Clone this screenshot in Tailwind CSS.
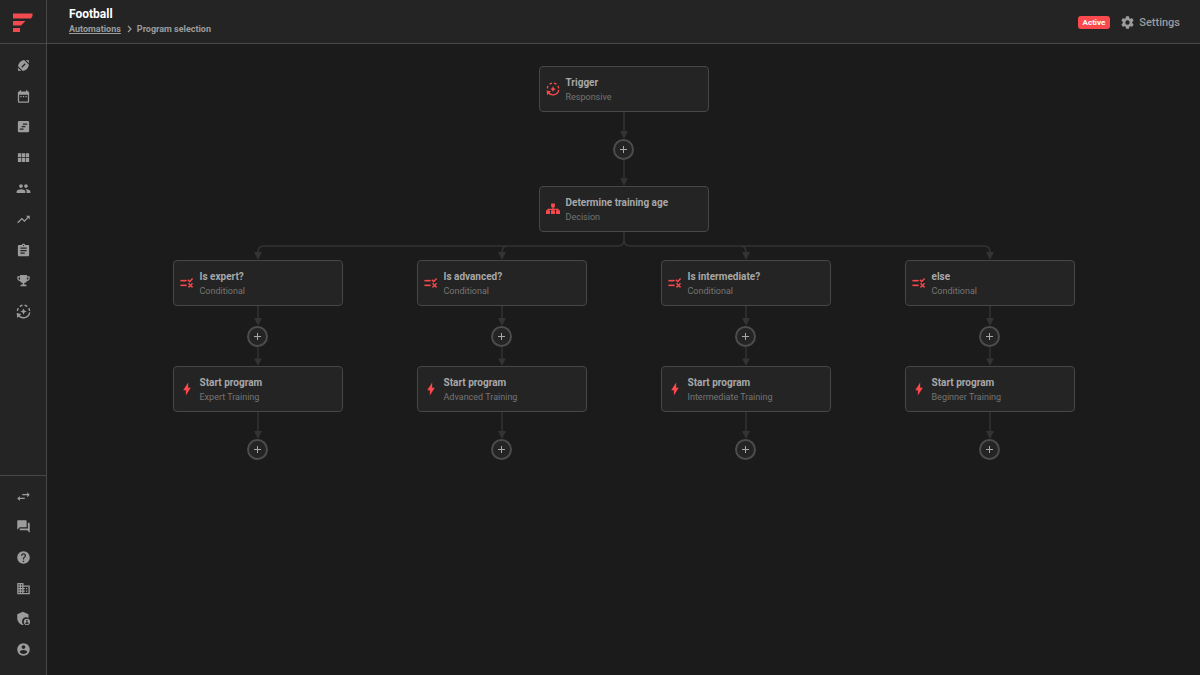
<!DOCTYPE html>
<html lang="en">
<head>
  <meta charset="UTF-8" />
  <meta name="viewport" content="width=device-width, initial-scale=1.0" />
  <title>Football - Program selection</title>
  <script src="https://cdn.jsdelivr.net/npm/@tailwindcss/browser@4"></script>
</head>
<body class="flex min-h-screen bg-[#1b1b1b] font-['Roboto',sans-serif] text-[#9c9c9c]">

  <!-- Icons -->
  <svg class="hidden">
    <symbol id="ball" viewBox="0 0 24 24"><path d="M3.02 15.62c-.08 2.42.32 4.34.67 4.69s2.28.76 4.69.67L3.02 15.62zM13.08 3.28C10.75 3.7 8.29 4.62 6.46 6.46s-2.76 4.29-3.18 6.62l7.63 7.63c2.34-.41 4.79-1.34 6.62-3.18s2.76-4.29 3.18-6.62L13.08 3.28zM9.9 15.5l-1.4-1.4 5.6-5.6 1.4 1.4-5.6 5.6zM20.98 8.38c.08-2.42-.32-4.34-.67-4.69s-2.28-.76-4.69-.67l5.36 5.36z"/></symbol>
    <symbol id="calendar" viewBox="0 0 24 24"><path d="M9 11H7v2h2v-2zm4 0h-2v2h2v-2zm4 0h-2v2h2v-2zm2-7h-1V2h-2v2H8V2H6v2H5c-1.11 0-2 .9-2 2v14c0 1.1.89 2 2 2h14c1.1 0 2-.9 2-2V6c0-1.1-.9-2-2-2zm0 16H5V9h14v11z"/></symbol>
    <symbol id="program" viewBox="0 0 24 24"><path fill-rule="evenodd" d="M5 3h14a2 2 0 0 1 2 2v14a2 2 0 0 1-2 2H5a2 2 0 0 1-2-2V5a2 2 0 0 1 2-2zm6 4v2h7V7h-7zm-2 4v2h6v-2H9zm-3 4v2h6v-2H6z"/></symbol>
    <symbol id="grid" viewBox="0 0 24 24"><path d="M3 5h5.300v6.400H3zm6.300 0h5.400v6.400H9.300zm6.400 0H21v6.400h-5.300zM3 12.600h5.300V19H3zm6.300 0h5.400V19H9.300zm6.400 0H21V19h-5.300z"/></symbol>
    <symbol id="people" viewBox="0 0 24 24"><path d="M16 11c1.660 0 2.990-1.340 2.990-3S17.660 5 16 5c-1.660 0-3 1.340-3 3s1.340 3 3 3zm-8 0c1.660 0 2.990-1.340 2.990-3S9.660 5 8 5C6.340 5 5 6.340 5 8s1.340 3 3 3zm0 2c-2.330 0-7 1.170-7 3.500V19h14v-2.500c0-2.330-4.670-3.500-7-3.500zm8 0c-.29 0-.62.02-.97.05 1.160.84 1.970 1.970 1.970 3.450V19h6v-2.500c0-2.330-4.670-3.500-7-3.500z"/></symbol>
    <symbol id="trend" viewBox="0 0 24 24"><path d="M16 6l2.290 2.290-4.880 4.880-4-4L2 16.590 3.410 18l6-6 4 4 6.300-6.290L22 12V6z"/></symbol>
    <symbol id="clipboard" viewBox="0 0 24 24"><path d="M19 3h-4.180C14.400 1.840 13.300 1 12 1c-1.300 0-2.400.84-2.820 2H5c-1.100 0-2 .9-2 2v14c0 1.100.9 2 2 2h14c1.100 0 2-.9 2-2V5c0-1.100-.9-2-2-2zm-7 0c.55 0 1 .45 1 1s-.45 1-1 1-1-.45-1-1 .45-1 1-1zm2 14H7v-2h7v2zm3-4H7v-2h10v2zm0-4H7V7h10v2z"/></symbol>
    <symbol id="trophy" viewBox="0 0 24 24"><path d="M21 5h-3.500V3h-11v2H3c-.6 0-1 .5-1 1v2c0 2.700 2 4.900 4.600 5.100.8 1.500 2.300 2.600 4.200 2.900v2.500H9.500C8 18.500 7 19.500 7 21h10c0-1.500-1-2.500-2.500-2.500h-1.300V16c1.900-.3 3.400-1.400 4.200-2.900C20 12.900 22 10.700 22 8V6c0-.5-.4-1-1-1zM4 8V7h2.500v4C5 10.600 4 9.400 4 8zm16 0c0 1.400-1 2.600-2.500 3V7H20v1z"/></symbol>
    <symbol id="auto" viewBox="0 0 24 24"><path fill="none" stroke="currentColor" stroke-width="2.200" d="M2.200 11a10 10 0 0 1 1.500-4.500M6 4a10 10 0 0 1 4.300-2M13.700 2A10 10 0 0 1 18 4M20.300 6.500a10 10 0 0 1 1.500 4.500M21.900 13.500A10 10 0 0 1 4 18"/><path d="M1 14.500l7.500 1.500L2 22.500zM12 7l1.500 3.500L17 12l-3.500 1.500L12 17l-1.500-3.500L7 12l3.500-1.500z"/></symbol>
    <symbol id="swap" viewBox="0 0 24 24"><path d="M22 9l-4-4v3h-8v2h8v3zM6 11l-4 4 4 4v-3h8v-2H6z"/></symbol>
    <symbol id="chat" viewBox="0 0 24 24"><path d="M21 6h-2v9H6v2c0 .55.45 1 1 1h11l4 4V7c0-.55-.45-1-1-1zm-4 6V3c0-.55-.45-1-1-1H3c-.55 0-1 .45-1 1v14l4-4h10c.55 0 1-.45 1-1z"/></symbol>
    <symbol id="help" viewBox="0 0 24 24"><path d="M12 2C6.480 2 2 6.480 2 12s4.480 10 10 10 10-4.480 10-10S17.520 2 12 2zm1 17h-2v-2h2v2zm2.070-7.750l-.9.920C13.450 12.900 13 13.500 13 15h-2v-.5c0-1.100.45-2.100 1.170-2.830l1.240-1.260c.37-.36.59-.86.59-1.410 0-1.100-.9-2-2-2s-2 .9-2 2H8c0-2.210 1.790-4 4-4s4 1.790 4 4c0 .88-.36 1.680-.93 2.250z"/></symbol>
    <symbol id="company" viewBox="0 0 24 24"><path d="M12 7V3H2v18h20V7H12zM6 19H4v-2h2v2zm0-4H4v-2h2v2zm0-4H4V9h2v2zm0-4H4V5h2v2zm4 12H8v-2h2v2zm0-4H8v-2h2v2zm0-4H8V9h2v2zm0-4H8V5h2v2zm10 12h-8v-2h2v-2h-2v-2h2v-2h-2V9h8v10zm-2-8h-2v2h2v-2zm0 4h-2v2h2v-2z"/></symbol>
    <symbol id="shield" viewBox="0 0 24 24"><path d="M11 1L2 5v6c0 5.500 3.800 10.300 9 11.500.5-.1 1-.3 1.400-.4A6.500 6.500 0 0 1 20 11.300V5z"/><path fill-rule="evenodd" d="M17.500 12.500a5 5 0 1 0 0 10 5 5 0 0 0 0-10zm0 1.700a1.500 1.500 0 1 1 0 3 1.500 1.500 0 0 1 0-3zm0 3.900c1 0 2.800.5 2.900 1.500a3.500 3.500 0 0 1-5.800 0c.1-1 1.900-1.500 2.900-1.500z"/></symbol>
    <symbol id="account" viewBox="0 0 24 24"><path d="M12 2C6.480 2 2 6.480 2 12s4.480 10 10 10 10-4.480 10-10S17.520 2 12 2zm0 3c1.660 0 3 1.340 3 3s-1.340 3-3 3-3-1.340-3-3 1.340-3 3-3zm0 14.200c-2.500 0-4.710-1.280-6-3.220.03-1.990 4-3.080 6-3.080 1.990 0 5.970 1.090 6 3.080-1.290 1.940-3.500 3.220-6 3.220z"/></symbol>
    <symbol id="gear" viewBox="0 0 24 24"><path d="M12 15.500A3.500 3.500 0 0 1 8.500 12 3.500 3.500 0 0 1 12 8.500a3.500 3.500 0 0 1 3.500 3.500 3.500 3.500 0 0 1-3.500 3.500m7.430-2.530c.04-.32.07-.64.07-.97s-.03-.66-.07-1l2.110-1.630c.19-.15.24-.42.12-.64l-2-3.460c-.12-.22-.39-.31-.61-.22l-2.490 1c-.52-.39-1.060-.73-1.690-.98l-.37-2.650A.506.506 0 0 0 14 2h-4c-.25 0-.46.18-.5.42l-.37 2.650c-.63.25-1.170.59-1.690.98l-2.490-1c-.22-.09-.49 0-.61.22l-2 3.460c-.13.22-.07.49.12.64L4.570 11c-.04.34-.07.67-.07 1s.03.65.07.97l-2.110 1.660c-.19.15-.25.42-.12.64l2 3.460c.12.22.39.3.61.22l2.490-1.010c.52.4 1.060.74 1.690.99l.37 2.650c.04.24.25.42.5.42h4c.25 0 .46-.18.5-.42l.37-2.650c.63-.26 1.170-.59 1.690-.99l2.490 1.010c.22.08.49 0 .61-.22l2-3.460c.12-.22.07-.49-.12-.64z"/></symbol>
    <symbol id="decision" viewBox="0 0 24 24"><path d="M8.800 2.500h6.400v6.500h-2v3.500h-2.400V9h-2zM3 11.500h18v2H3z"/><rect y="14" width="6.800" height="6.500" rx="1"/><rect x="8.600" y="14" width="6.800" height="6.500" rx="1"/><rect x="17.200" y="14" width="6.800" height="6.500" rx="1"/><path d="M2.400 12h2v3h-2zM11 12h2v3h-2zM19.600 12h2v3h-2z"/></symbol>
    <symbol id="rule" viewBox="0 0 24 24"><path d="M16.540 11L13 7.460l1.410-1.410 2.120 2.120 4.240-4.240 1.410 1.410L16.540 11zM11 7H1v2h10V7zm11 6.410L20.590 12 18 14.590 15.410 12 14 13.410 16.590 16 14 18.590 15.410 20 18 17.410 20.590 20 22 18.590 19.410 16 22 13.410zM11 15H1v2h10v-2z" stroke="currentColor" stroke-width=".6"/></symbol>
    <symbol id="bolt" viewBox="0 0 24 24"><path d="M14 1L5.500 14H10v9l8.500-13H14z"/></symbol>
    <symbol id="plus" viewBox="0 0 7 7"><path fill="none" stroke="currentColor" d="M3.500 0v7M0 3.500h7"/></symbol>
    <symbol id="arrow-27" viewBox="0 0 10 27"><path fill="none" stroke="currentColor" stroke-width="1.500" d="M5 0v22"/><path d="M1 19h8l-4 8z"/></symbol>
    <symbol id="arrow-20" viewBox="0 0 10 20"><path fill="none" stroke="currentColor" stroke-width="1.500" d="M5 0v15"/><path d="M1 12h8l-4 8z"/></symbol>
  </svg>

  <!-- Sidebar -->
  <aside class="flex w-[47px] shrink-0 flex-col border-r border-[#474747] bg-[#242424]">
    <a href="#" aria-label="Home" class="flex h-11 items-center justify-center border-b border-[#474747]">
      <svg class="h-5 w-5 fill-[#f14b4f]" viewBox="0 0 20 20"><path d="M0 1.500h19.500V4L18 6.500H0zM0 9h12.500L8 13.500H0zM0 16h7v4H0z"/></svg>
    </a>
    <nav aria-label="Main" class="mt-1.5 grid h-[277px] auto-rows-fr place-items-center">
      <a href="#" aria-label="Exercises"><svg class="size-[15px] fill-current"><use href="#ball"/></svg></a>
      <a href="#" aria-label="Calendar"><svg class="size-[15px] fill-current"><use href="#calendar"/></svg></a>
      <a href="#" aria-label="Programs"><svg class="size-[15px] fill-current"><use href="#program"/></svg></a>
      <a href="#" aria-label="Library"><svg class="size-[15px] fill-current"><use href="#grid"/></svg></a>
      <a href="#" aria-label="Athletes"><svg class="size-[15px] fill-current"><use href="#people"/></svg></a>
      <a href="#" aria-label="Analytics"><svg class="size-[15px] fill-current"><use href="#trend"/></svg></a>
      <a href="#" aria-label="Forms"><svg class="size-[15px] fill-current"><use href="#clipboard"/></svg></a>
      <a href="#" aria-label="Leaderboard"><svg class="size-[15px] fill-current"><use href="#trophy"/></svg></a>
      <a href="#" aria-label="Automations"><svg class="size-[15px] fill-current"><use href="#auto"/></svg></a>
    </nav>
    <nav aria-label="Account" class="mt-auto border-t border-[#474747] pt-[5px] pb-2.5">
      <div class="grid h-[184px] auto-rows-fr place-items-center">
        <a href="#" aria-label="Switch"><svg class="size-[15px] fill-current"><use href="#swap"/></svg></a>
        <a href="#" aria-label="Messages"><svg class="size-[15px] fill-current"><use href="#chat"/></svg></a>
        <a href="#" aria-label="Help"><svg class="size-[15px] fill-current"><use href="#help"/></svg></a>
        <a href="#" aria-label="Organization"><svg class="size-[15px] fill-current"><use href="#company"/></svg></a>
        <a href="#" aria-label="Admin"><svg class="size-[15px] fill-current"><use href="#shield"/></svg></a>
        <a href="#" aria-label="Profile"><svg class="size-[15px] fill-current"><use href="#account"/></svg></a>
      </div>
    </nav>
  </aside>

  <div class="flex min-w-0 flex-1 flex-col">
    <!-- Header -->
    <header class="flex h-11 items-center justify-between border-b border-[#474747] bg-[#242424] pr-5 pl-[22px]">
      <div class="pb-0.5">
        <h1 class="text-[12px] leading-4 font-bold text-white">Football</h1>
        <nav aria-label="Breadcrumb" class="flex items-center gap-1 text-[9px] leading-[14px] font-bold">
          <a href="#" class="underline">Automations</a>
          <svg class="h-2 w-2 fill-none stroke-current" viewBox="0 0 8 8"><path stroke-width="1.200" d="M3 1l3 3-3 3"/></svg>
          <span>Program selection</span>
        </nav>
      </div>
      <div class="flex items-center gap-2.5 pt-0.5">
        <span class="rounded-[3px] bg-[#fb4a4e] px-[5px] text-[8px] leading-[13px] font-bold text-white">Active</span>
        <button type="button" class="flex items-center gap-1 text-[11px] leading-4 font-medium">
          <svg class="size-[15px] fill-current"><use href="#gear"/></svg>
          Settings
        </button>
      </div>
    </header>

    <!-- Flow -->
    <main class="flex flex-1 flex-col items-center pt-[22px] text-[#333]">
      <button type="button" class="flex h-[46px] w-[170px] items-center gap-1.5 rounded border border-[#474747] bg-[#242424] px-1.5 text-left">
        <svg class="size-3.5 shrink-0 fill-current text-[#fb4a4e]"><use href="#auto"/></svg>
        <span class="pt-0.5">
          <span class="block text-[10px] leading-[14px] font-bold text-[#a8a8a8]">Trigger</span>
          <span class="block text-[9px] leading-[14px] text-[#757575]">Responsive</span>
        </span>
      </button>
      <svg class="h-[27px] w-2.5 fill-current"><use href="#arrow-27"/></svg>
      <button type="button" aria-label="Add step" class="flex size-[21px] items-center justify-center rounded-full border-2 border-[#4c4c4c] bg-[#242424] text-[#a8a8a8]"><svg class="size-[7px]"><use href="#plus"/></svg></button>
      <svg class="h-[26px] w-2.5 fill-current"><use href="#arrow-27"/></svg>
      <button type="button" class="flex h-[46px] w-[170px] items-center gap-1.5 rounded border border-[#474747] bg-[#242424] px-1.5 text-left">
        <svg class="size-3.5 shrink-0 fill-current text-[#fb4a4e]"><use href="#decision"/></svg>
        <span class="pt-0.5">
          <span class="block text-[10px] leading-[14px] font-bold text-[#a8a8a8]">Determine training age</span>
          <span class="block text-[9px] leading-[14px] text-[#757575]">Decision</span>
        </span>
      </button>

      <!-- Branches -->
      <svg class="h-7 w-[902px] fill-current" viewBox="0 0 902 28">
        <path fill="none" stroke="currentColor" stroke-width="1.500" d="M451 0v8q0 6-6 6H91q-6 0-6 6v2M451 8q0 6 6 6h354q6 0 6 6v2M335 14q-6 0-6 6v2M567 14q6 0 6 6v2"/>
        <path d="M81 20h8l-4 8zM325 20h8l-4 8zM569 20h8l-4 8zM813 20h8l-4 8z"/>
      </svg>

      <div class="flex gap-[74px]">
        <div class="flex flex-col items-center">
          <button type="button" class="flex h-[46px] w-[170px] items-center gap-1.5 rounded border border-[#474747] bg-[#242424] px-1.5 text-left">
            <svg class="size-3.5 shrink-0 fill-current text-[#fb4a4e]"><use href="#rule"/></svg>
            <span class="pt-0.5">
              <span class="block text-[10px] leading-[14px] font-bold text-[#a8a8a8]">Is expert?</span>
              <span class="block text-[9px] leading-[14px] text-[#757575]">Conditional</span>
            </span>
          </button>
          <svg class="h-5 w-2.5 fill-current"><use href="#arrow-20"/></svg>
          <button type="button" aria-label="Add step" class="flex size-[21px] items-center justify-center rounded-full border-2 border-[#4c4c4c] bg-[#242424] text-[#a8a8a8]"><svg class="size-[7px]"><use href="#plus"/></svg></button>
          <svg class="h-[19px] w-2.5 fill-current"><use href="#arrow-20"/></svg>
          <button type="button" class="flex h-[46px] w-[170px] items-center gap-1.5 rounded border border-[#474747] bg-[#242424] px-1.5 text-left">
            <svg class="size-3.5 shrink-0 fill-current text-[#fb4a4e]"><use href="#bolt"/></svg>
            <span class="pt-0.5">
              <span class="block text-[10px] leading-[14px] font-bold text-[#a8a8a8]">Start program</span>
              <span class="block text-[9px] leading-[14px] text-[#757575]">Expert Training</span>
            </span>
          </button>
          <svg class="h-[27px] w-2.5 fill-current"><use href="#arrow-27"/></svg>
          <button type="button" aria-label="Add step" class="flex size-[21px] items-center justify-center rounded-full border-2 border-[#4c4c4c] bg-[#242424] text-[#a8a8a8]"><svg class="size-[7px]"><use href="#plus"/></svg></button>
        </div>

        <div class="flex flex-col items-center">
          <button type="button" class="flex h-[46px] w-[170px] items-center gap-1.5 rounded border border-[#474747] bg-[#242424] px-1.5 text-left">
            <svg class="size-3.5 shrink-0 fill-current text-[#fb4a4e]"><use href="#rule"/></svg>
            <span class="pt-0.5">
              <span class="block text-[10px] leading-[14px] font-bold text-[#a8a8a8]">Is advanced?</span>
              <span class="block text-[9px] leading-[14px] text-[#757575]">Conditional</span>
            </span>
          </button>
          <svg class="h-5 w-2.5 fill-current"><use href="#arrow-20"/></svg>
          <button type="button" aria-label="Add step" class="flex size-[21px] items-center justify-center rounded-full border-2 border-[#4c4c4c] bg-[#242424] text-[#a8a8a8]"><svg class="size-[7px]"><use href="#plus"/></svg></button>
          <svg class="h-[19px] w-2.5 fill-current"><use href="#arrow-20"/></svg>
          <button type="button" class="flex h-[46px] w-[170px] items-center gap-1.5 rounded border border-[#474747] bg-[#242424] px-1.5 text-left">
            <svg class="size-3.5 shrink-0 fill-current text-[#fb4a4e]"><use href="#bolt"/></svg>
            <span class="pt-0.5">
              <span class="block text-[10px] leading-[14px] font-bold text-[#a8a8a8]">Start program</span>
              <span class="block text-[9px] leading-[14px] text-[#757575]">Advanced Training</span>
            </span>
          </button>
          <svg class="h-[27px] w-2.5 fill-current"><use href="#arrow-27"/></svg>
          <button type="button" aria-label="Add step" class="flex size-[21px] items-center justify-center rounded-full border-2 border-[#4c4c4c] bg-[#242424] text-[#a8a8a8]"><svg class="size-[7px]"><use href="#plus"/></svg></button>
        </div>

        <div class="flex flex-col items-center">
          <button type="button" class="flex h-[46px] w-[170px] items-center gap-1.5 rounded border border-[#474747] bg-[#242424] px-1.5 text-left">
            <svg class="size-3.5 shrink-0 fill-current text-[#fb4a4e]"><use href="#rule"/></svg>
            <span class="pt-0.5">
              <span class="block text-[10px] leading-[14px] font-bold text-[#a8a8a8]">Is intermediate?</span>
              <span class="block text-[9px] leading-[14px] text-[#757575]">Conditional</span>
            </span>
          </button>
          <svg class="h-5 w-2.5 fill-current"><use href="#arrow-20"/></svg>
          <button type="button" aria-label="Add step" class="flex size-[21px] items-center justify-center rounded-full border-2 border-[#4c4c4c] bg-[#242424] text-[#a8a8a8]"><svg class="size-[7px]"><use href="#plus"/></svg></button>
          <svg class="h-[19px] w-2.5 fill-current"><use href="#arrow-20"/></svg>
          <button type="button" class="flex h-[46px] w-[170px] items-center gap-1.5 rounded border border-[#474747] bg-[#242424] px-1.5 text-left">
            <svg class="size-3.5 shrink-0 fill-current text-[#fb4a4e]"><use href="#bolt"/></svg>
            <span class="pt-0.5">
              <span class="block text-[10px] leading-[14px] font-bold text-[#a8a8a8]">Start program</span>
              <span class="block text-[9px] leading-[14px] text-[#757575]">Intermediate Training</span>
            </span>
          </button>
          <svg class="h-[27px] w-2.5 fill-current"><use href="#arrow-27"/></svg>
          <button type="button" aria-label="Add step" class="flex size-[21px] items-center justify-center rounded-full border-2 border-[#4c4c4c] bg-[#242424] text-[#a8a8a8]"><svg class="size-[7px]"><use href="#plus"/></svg></button>
        </div>

        <div class="flex flex-col items-center">
          <button type="button" class="flex h-[46px] w-[170px] items-center gap-1.5 rounded border border-[#474747] bg-[#242424] px-1.5 text-left">
            <svg class="size-3.5 shrink-0 fill-current text-[#fb4a4e]"><use href="#rule"/></svg>
            <span class="pt-0.5">
              <span class="block text-[10px] leading-[14px] font-bold text-[#a8a8a8]">else</span>
              <span class="block text-[9px] leading-[14px] text-[#757575]">Conditional</span>
            </span>
          </button>
          <svg class="h-5 w-2.5 fill-current"><use href="#arrow-20"/></svg>
          <button type="button" aria-label="Add step" class="flex size-[21px] items-center justify-center rounded-full border-2 border-[#4c4c4c] bg-[#242424] text-[#a8a8a8]"><svg class="size-[7px]"><use href="#plus"/></svg></button>
          <svg class="h-[19px] w-2.5 fill-current"><use href="#arrow-20"/></svg>
          <button type="button" class="flex h-[46px] w-[170px] items-center gap-1.5 rounded border border-[#474747] bg-[#242424] px-1.5 text-left">
            <svg class="size-3.5 shrink-0 fill-current text-[#fb4a4e]"><use href="#bolt"/></svg>
            <span class="pt-0.5">
              <span class="block text-[10px] leading-[14px] font-bold text-[#a8a8a8]">Start program</span>
              <span class="block text-[9px] leading-[14px] text-[#757575]">Beginner Training</span>
            </span>
          </button>
          <svg class="h-[27px] w-2.5 fill-current"><use href="#arrow-27"/></svg>
          <button type="button" aria-label="Add step" class="flex size-[21px] items-center justify-center rounded-full border-2 border-[#4c4c4c] bg-[#242424] text-[#a8a8a8]"><svg class="size-[7px]"><use href="#plus"/></svg></button>
        </div>
      </div>
    </main>
  </div>

</body>
</html>
